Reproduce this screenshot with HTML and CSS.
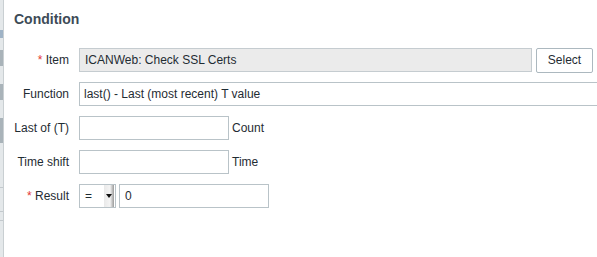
FILE: index.html
```html
<!DOCTYPE html>
<html>
<head>
<meta charset="utf-8">
<link rel="stylesheet" href="styles.css">
</head>
<body>
<div class="page">
  <div class="backdrop"></div>
  <div class="dialog">
    <h3 class="title">Condition</h3>
    <div class="form">
      <label class="lbl"><span class="req">*</span> Item</label>
      <div class="field">
        <div class="input ro w-item">ICANWeb: Check SSL Certs</div>
        <button class="btn">Select</button>
      </div>

      <label class="lbl">Function</label>
      <div class="field">
        <div class="input sel w-func">last() - Last (most recent) T value</div>
      </div>

      <label class="lbl">Last of (T)</label>
      <div class="field">
        <div class="input w-150"></div>
        <span class="suffix">Count</span>
      </div>

      <label class="lbl">Time shift</label>
      <div class="field">
        <div class="input w-150"></div>
        <span class="suffix">Time</span>
      </div>

      <label class="lbl"><span class="req">*</span> Result</label>
      <div class="field">
        <div class="input op">=<span class="arrow"><span class="tri"></span></span></div>
        <div class="input w-150">0</div>
      </div>
    </div>
  </div>
</div>
</body>
</html>
```

FILE: styles.css
```css
html, body {
  margin: 0;
  padding: 0;
  background: #ffffff;
  overflow: hidden;
}
body {
  width: 597px;
  height: 257px;
  font-family: "Liberation Sans", Arial, sans-serif;
  font-size: 12px;
  color: #1f2c33;
}
.page {
  display: flex;
  height: 257px;
}
.backdrop {
  width: 3px;
  flex: none;
  border-right: 1px solid #c9cfd2;
  background: linear-gradient(to bottom,
    #e4e8ea 0, #e4e8ea 30px, #9fb3c6 30px, #9fb3c6 38px,
    #e4e8ea 38px, #e4e8ea 50px, #a9b3b9 50px, #a9b3b9 66px,
    #e4e8ea 66px, #e4e8ea 84px, #a9b3b9 84px, #a9b3b9 100px,
    #e4e8ea 100px, #e4e8ea 118px, #a9b3b9 118px, #a9b3b9 143px,
    #e4e8ea 143px, #e4e8ea 187px, #c3c9cd 187px, #c3c9cd 188px,
    #e4e8ea 188px, #e4e8ea 211px, #c3c9cd 211px, #c3c9cd 212px,
    #e4e8ea 212px, #e4e8ea 220px, #c3c9cd 220px, #c3c9cd 221px,
    #e4e8ea 221px);
}
.dialog {
  flex: 1;
  padding: 10px 0 0 10px;
  min-width: 0;
}
.title {
  margin: 0 0 20px 0;
  font-size: 14px;
  font-weight: bold;
  line-height: 18px;
  color: #3d4b57;
}
.form {
  display: grid;
  grid-template-columns: 55px 1fr;
  column-gap: 10px;
  row-gap: 10px;
}
.lbl {
  text-align: right;
  line-height: 24px;
  white-space: nowrap;
  color: #1f2c33;
}
.req {
  color: #e33734;
}
.field {
  display: flex;
  align-items: center;
  gap: 3px;
  height: 24px;
  white-space: nowrap;
}
.input {
  box-sizing: border-box;
  height: 24px;
  border: 1px solid #b9c3c8;
  background: #ffffff;
  padding: 0 5px;
  line-height: 22px;
  flex: none;
  overflow: hidden;
}
.ro {
  background: #ebebeb;
  border-color: #c5ccd0;
}
.w-item { width: 453px; }
.w-func { width: 518px; padding-left: 4px; border-right: 0; }
.w-150 { width: 150px; }
.suffix { color: #1f2c33; }
.btn {
  box-sizing: border-box;
  height: 25px;
  width: 57px;
  margin-left: 1px;
  border: 1px solid #acb8bf;
  border-radius: 2px;
  background: #ffffff;
  color: #1f2c33;
  font-family: "Liberation Sans", Arial, sans-serif;
  font-size: 12px;
  padding: 0;
  flex: none;
}
.op {
  width: 37px;
  position: relative;
  padding-left: 5px;
}
.arrow {
  position: absolute;
  top: 0;
  right: 1px;
  width: 10px;
  height: 22px;
  background: linear-gradient(to right, #e9e9e9, #f4f4f4 60%, #9a9a9a 100%);
}
.tri {
  position: absolute;
  left: 2px;
  top: 9px;
  width: 0;
  height: 0;
  border-left: 3px solid transparent;
  border-right: 3px solid transparent;
  border-top: 4px solid #111111;
}
```
